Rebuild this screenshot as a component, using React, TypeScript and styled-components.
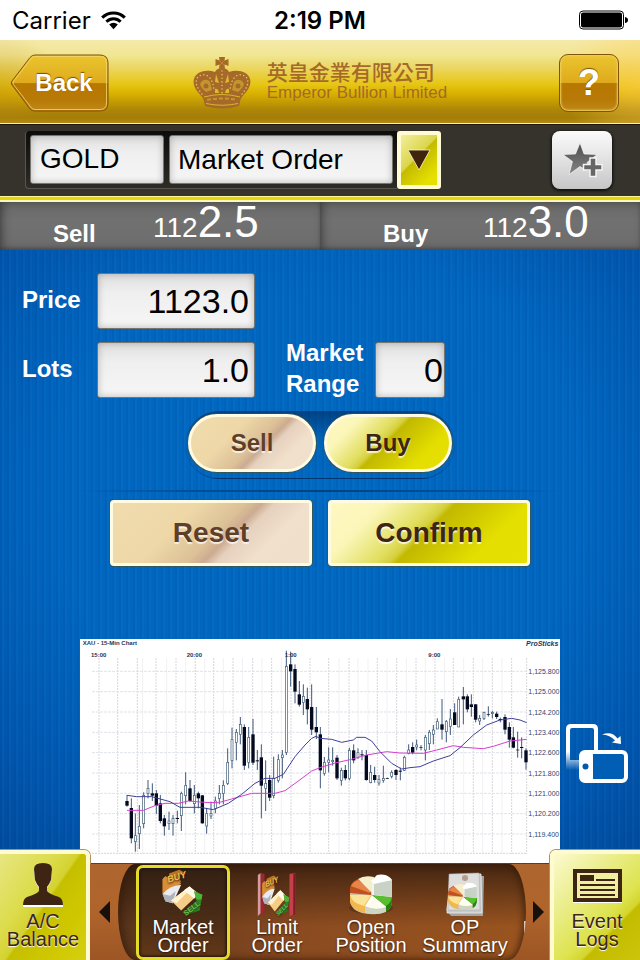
import React from "react";
import styled, { createGlobalStyle, css } from "styled-components";

const GlobalStyle = createGlobalStyle`
  *, *::before, *::after { box-sizing: border-box; }
  body { margin: 0; font-family: "Liberation Sans", Arial, sans-serif; }
  button, input, select { font-family: inherit; margin: 0; border-radius: 0; }
  button { cursor: pointer; padding: 0; border: 0; }
  svg { display: block; flex: none; }
`;

const Page = styled.div`
  display: flex;
  flex-direction: column;
  min-height: 100vh;
  overflow: hidden;
  background: #0056b0;
`;

/* ---------- status bar ---------- */

const StatusBar = styled.div`
  display: grid;
  grid-template-columns: 1fr auto 1fr;
  align-items: center;
  height: 40px;
  padding: 0 12px;
  background: #fff;
  color: #000;
  font-family: Inter, sans-serif;
  font-size: 24px;
`;

const Carrier = styled.div`
  display: flex;
  align-items: center;
  gap: 10px;
`;

const Clock = styled.time`
  font-weight: 600;
`;

const BatterySlot = styled.div`
  justify-self: end;
`;

/* ---------- header ---------- */

const Header = styled.header`
  display: grid;
  grid-template-columns: 1fr auto 1fr;
  align-items: center;
  height: 84px;
  padding: 2px 21px 0 10px;
  border-bottom: 1px solid #fff0c0;
  background:
    radial-gradient(ellipse 12% 90% at 100% 50%, rgba(255, 205, 80, 0.6), transparent),
    radial-gradient(ellipse 10% 70% at 0% 60%, rgba(190, 140, 20, 0.4), transparent),
    linear-gradient(#f5e9ab 0%, #f1e693 18%, #ebd660 34%, #e6c512 54%, #d8b000 65%, #ad8607 84%, #a37d08 94%, #b48a10 100%);
`;

const BackButton = styled.button`
  position: relative;
  width: 99px;
  height: 58px;
  padding-left: 9px;
  background: none;
  color: #fff;
  font-size: 24px;
  font-weight: 700;
  text-shadow: 0 -1px 1px #7c4d00;

  svg { position: absolute; inset: 0; }
  span { position: relative; }
`;

const HelpButton = styled.button`
  justify-self: end;
  width: 60px;
  height: 58px;
  border: 1px solid #82530b;
  border-radius: 9px;
  background: linear-gradient(#ebc52f 0%, #deaa1c 49%, #b87800 51%, #b77a06 80%, #c08917 100%);
  box-shadow: inset 0 0 2px 1px #f0d060;
  color: #fff;
  font-size: 36px;
  font-weight: 700;
  text-shadow: 0 -1px 1px #7c4d00;
`;

const Brand = styled.div`
  display: flex;
  align-items: center;
  gap: 16px;
  margin-right: -11px;
  color: #a5692a;
`;

const BrandName = styled.div`
  font-family: "Liberation Sans", "Noto Sans CJK TC", sans-serif;
  font-size: 21px;
  font-weight: 500;
  line-height: 20px;
`;

const BrandLatin = styled.div`
  font-size: 17px;
  line-height: 20px;
`;

/* ---------- instrument selector ---------- */

const SelectorBar = styled.section`
  display: flex;
  align-items: center;
  justify-content: space-between;
  height: 72px;
  padding: 0 28px 2px 25px;
  border-top: 1px solid #1d1508;
  background: #36332c;
`;

const SelectorGroup = styled.div`
  display: flex;
  align-items: center;
`;

const Recess = styled.div`
  display: flex;
  gap: 5px;
  padding: 4px;
  border: solid #575550;
  border-width: 0 0 1px 1px;
  border-radius: 4px 0 0 4px;
  background: linear-gradient(#0c0c0c, #2f2c27);
`;

const fieldSkin = css`
  border: 1px solid #77756f;
  border-radius: 3px;
  outline: 0;
  background: linear-gradient(#dfdfdf, #efefef 35%, #f6f6f6);
  box-shadow: inset 0 0 7px rgba(90, 90, 90, 0.4);
  color: #000;
`;

const SymbolInput = styled.input`
  ${fieldSkin}
  width: 134px;
  height: 49px;
  padding: 0 9px;
  font-size: 28px;
`;

const TypeSelect = styled.select`
  ${fieldSkin}
  appearance: none;
  width: 224px;
  height: 49px;
  padding: 0 8px;
  font-size: 28px;
`;

const DropButton = styled.button`
  display: grid;
  place-items: center;
  width: 44px;
  height: 58px;
  border: 4px solid #fffbd2;
  border-radius: 3px;
  background: linear-gradient(135deg, #f3ef9c 0%, #dbd64c 43%, #c4bb00 46%, #d0c800 60%, #e6e000 85%);
`;

const FavButton = styled.button`
  display: grid;
  place-items: center;
  width: 60px;
  height: 58px;
  border-radius: 8px;
  background: linear-gradient(#fbfbfb, #e4e4e4 45%, #c6c6c6);
  box-shadow: 0 1px 3px 1px rgba(0, 0, 0, 0.7);
`;

/* ---------- quotes ---------- */

const Quotes = styled.section`
  display: grid;
  grid-template-columns: 1fr 1fr;
  padding-top: 6px;
  background: linear-gradient(#fff59a 0 1px, #e0d80c 1px 4px, #fff6bd 4px 6px, #6c6c6c 6px);
`;

const Quote = styled.div<{ $inset: number }>`
  display: flex;
  align-items: flex-end;
  height: 48px;
  padding-left: ${(p) => p.$inset}px;
  background: linear-gradient(#686868, #717171 40%, #6c6c6c);
  box-shadow: inset 3px 0 8px rgba(0, 0, 0, 0.35), inset 0 -2px 3px rgba(0, 0, 0, 0.15);
  color: #fff;
`;

const QuoteLabel = styled.span`
  width: 100px;
  font-size: 24px;
  font-weight: 700;
  line-height: 32px;
`;

const QuotePrice = styled.span`
  font-size: 28px;
  line-height: 44px;

  strong { font-size: 44px; font-weight: 400; }
`;

/* ---------- order form ---------- */

const Body = styled.main`
  flex: 1;
  display: flex;
  flex-direction: column;
  padding-top: 23px;
  background:
    linear-gradient(rgba(0, 70, 150, 0.08), rgba(0, 70, 150, 0) 8%),
    repeating-linear-gradient(90deg, rgba(0, 40, 110, 0.08) 0 2px, rgba(60, 150, 230, 0.07) 2px 4px, transparent 4px 7px),
    radial-gradient(ellipse 75% 75% at 50% 40%, #0069c2 0%, #0066bf 55%, #0056ad 85%, #004c9e 100%);
`;

const OrderForm = styled.form`
  display: flex;
  flex-direction: column;
`;

const FieldRow = styled.div`
  display: flex;
  align-items: center;
  height: 56px;
  margin: 0 22px 13px;
`;

const FieldLabel = styled.label<{ $wide?: boolean }>`
  width: ${(p) => (p.$wide ? 89 : 75)}px;
  padding-bottom: 4px;
  color: #fff;
  font-size: 24px;
  font-weight: 700;
  line-height: 31px;
`;

const NumberInput = styled.input<{ $small?: boolean }>`
  ${fieldSkin}
  width: ${(p) => (p.$small ? 70 : 158)}px;
  height: 56px;
  padding: 0 ${(p) => (p.$small ? 1 : 5)}px;
  margin-right: 31px;
  font-size: 34px;
  text-align: right;
`;

const SideSwitch = styled.div`
  display: flex;
  align-self: center;
  gap: 8px;
  padding: 3px 3px 6px;
  border-bottom: 1px solid rgba(0, 30, 80, 0.35);
  border-radius: 34px;
  background: linear-gradient(rgba(0, 35, 80, 0.55), rgba(0, 60, 120, 0.12) 40%, transparent);
`;

const gold = css`
  background: linear-gradient(135deg, #fff8c4 0%, #fbf6b8 22%, #e1de5f 41%, #d5d03e 46%, #c2b900 49%, #cfc700 60%, #e4df00 76%, #e5e000 100%);
  color: #3d2413;
`;

const beige = css`
  background: linear-gradient(135deg, #f1dcae 0%, #eed8a8 34%, #dcc097 52%, #ccab91 58%, #e6d1be 63%, #f1e0cb 76%, #efdfcb 100%);
  color: #603f28;
`;

const ActionButton = styled.button<{ $tone: "gold" | "beige"; $pill?: boolean }>`
  ${(p) => (p.$tone === "gold" ? gold : beige)}
  ${(p) =>
    p.$pill
      ? css`
          width: 128px;
          height: 58px;
          border: 3px solid #fffbe2;
          border-radius: 29px;
          font-size: 24px;
        `
      : css`
          width: 202px;
          height: 66px;
          border: 3px solid #fffbe2;
          border-radius: 4px;
          font-size: 28px;
        `}
  background-origin: border-box;
  box-shadow: 0 0 0 1px rgba(80, 80, 30, 0.6);
  font-weight: 700;
  text-shadow: 0 2px 1px rgba(255, 255, 255, 0.75);
`;

const Divider = styled.hr`
  align-self: stretch;
  height: 2px;
  margin: 11px 80px 8px;
  border: 0;
  background: linear-gradient(90deg, transparent, #00509a 20%, #00437f 50%, #00509a 80%, transparent);
`;

const Actions = styled.div`
  display: flex;
  justify-content: center;
  gap: 16px;
`;

/* ---------- chart ---------- */

const ChartRow = styled.section`
  display: grid;
  grid-template-columns: 80px 1fr 80px;
  flex: 1;
  align-items: end;
  padding: 73px 0 1px;
`;

const ChartFrame = styled.figure`
  grid-column: 2;
  margin: 0;
  background: #fff;

  svg { width: 100%; height: auto; }
  text { font-family: "Liberation Sans", Arial, sans-serif; }
`;

const RotateButton = styled.button`
  align-self: center;
  justify-self: start;
  margin: 6px 0 0 6px;
  background: none;
`;

/* ---------- bottom navigation ---------- */

const BottomNav = styled.nav`
  position: relative;
  display: grid;
  grid-template-columns: 90px 1fr 90px;
  align-items: end;
  margin-top: -14px;
`;

const navText = css`
  font-size: 20px;
  line-height: 18px;
  text-align: center;
  text-decoration: none;
`;

const SideTab = styled.a<{ $side: "left" | "right" }>`
  ${navText}
  display: flex;
  flex-direction: column;
  align-items: center;
  justify-content: flex-end;
  gap: 5px;
  height: 110px;
  padding-bottom: 12px;
  border: 4px solid #fffbd0;
  border-bottom: 0;
  box-shadow: 0 0 0 1px #b2905a;
  ${(p) =>
    p.$side === "left"
      ? css`
          border-left: 0;
          border-radius: 0 6px 0 0;
          background: linear-gradient(125deg, #e7e682 0%, #dcdc4c 35%, #d4d230 49%, #c6bf00 51%, #cfc800 75%, #d5cf12 100%);
        `
      : css`
          border-right: 0;
          border-radius: 6px 0 0 0;
          background: linear-gradient(135deg, #fdfad0 0%, #eef09a 25%, #dde34e 60%, #d5d52e 69%, #c3bc00 71%, #cbc40a 100%);
        `}
  color: #3d2413;
  text-shadow: 0 1px 1px #fff;
`;

const Carousel = styled.div`
  display: grid;
  grid-template-columns: 28px 1fr 24px;
  height: 96px;
  background: linear-gradient(#ad662e, #b0642c 50%, #9c5524);
`;

const ArrowButton = styled.button`
  display: grid;
  place-items: center;
  background: none;
`;

const Strip = styled.div`
  display: flex;
  align-items: center;
  overflow: hidden;
  padding-left: 18px;
  border-radius: 17px / 50%;
  background:
    linear-gradient(rgba(40, 22, 12, 0.75), rgba(40, 22, 12, 0) 65%),
    linear-gradient(90deg, #5a361c, #8b4b20 45%, #99541f);
  box-shadow: inset -3px 0 6px rgba(50, 25, 10, 0.6), inset 5px 0 8px rgba(50, 25, 10, 0.5);
`;

const StripItem = styled.a<{ $active?: boolean }>`
  ${navText}
  display: flex;
  flex: none;
  flex-direction: column;
  align-items: center;
  justify-content: flex-end;
  width: 94px;
  height: 95px;
  padding-bottom: 3px;
  border: 3px solid transparent;
  color: #fff;
  text-shadow: 0 1px 2px #2b1608;
  ${(p) =>
    p.$active &&
    css`
      border-color: #e5dc2a;
      border-radius: 7px;
      background: linear-gradient(#332014, #4c2d17 60%, #633817);
      box-shadow: inset 0 0 3px 1px #1a0f08;
    `}
`;

const Peek = styled.span`
  width: 2px;
  height: 12px;
  margin: 30px 0 0 12px;
  background: #d9c9bb;
`;

/* ---------- icons ---------- */

const WifiIcon = () => (
  <svg width="25" height="19" viewBox="0 0 25 19" aria-hidden="true">
    <g fill="none" stroke="#000" strokeWidth="3">
      <path d="M1.2 6.6a16 16 0 0 1 22.6 0" />
      <path d="M5.4 10.8a10 10 0 0 1 14.2 0" />
    </g>
    <path d="M8.2 13.6a6 6 0 0 1 8.6 0L12.500 18.200z" />
  </svg>
);

const BatteryIcon = () => (
  <svg width="49" height="20" viewBox="0 0 49 20" aria-hidden="true">
    <rect x="0.500" y="1" width="44" height="18" rx="3.500" fill="none" stroke="#000" />
    <rect x="2" y="2.500" width="41" height="15" rx="2" />
    <path d="M46 7q3 .5 3 3t-3 3z" />
  </svg>
);

const BackShape = () => (
  <svg width="99" height="58" viewBox="0 0 99 58" aria-hidden="true">
    <defs>
      <linearGradient id="backFill" x1="0" y1="0" x2="0" y2="1">
        <stop offset="0" stopColor="#ebc52f" />
        <stop offset="0.500" stopColor="#deaa1c" />
        <stop offset="0.510" stopColor="#b87800" />
        <stop offset="0.800" stopColor="#b77a06" />
        <stop offset="1" stopColor="#c08917" />
      </linearGradient>
    </defs>
    <path d="M25 1H90Q98 1 98 9V49Q98 57 90 57H25Q22 57 20 55L2 31Q.5 29 2 27L20 3.500Q22 1 25 1Z" fill="url(#backFill)" stroke="#82530b" />
    <path d="M25 2.500H90Q96.500 2.500 96.500 9V49Q96.500 55.500 90 55.500H25Q23 55.500 21.500 54L3.500 30.500Q2.500 29 3.500 27.500L21.500 4.200Q23 2.500 25 2.500Z" fill="none" stroke="#f3d66a" opacity="0.800" />
  </svg>
);

const CrownIcon = () => (
  <svg width="58" height="52" viewBox="0 0 58 52" aria-hidden="true">
    <g fill="#a5692a">
      <path d="M26 0h6l-.5 3.500 4-1.500v7l-4-1.500.5 4h-6l.5-4-4 1.500V2l4 1.500z" />
      <path d="M29 11C25 11 23 13 22 15C14 12 3 14 1 22C-1 30 5 35 9 40L11 43H47L49 40C53 35 59 30 57 22C55 14 44 12 36 15C35 13 33 11 29 11Z" />
      <path d="M10 40Q29 35 48 40L46 49Q29 54 12 49Z" />
    </g>
    <g fill="#dfb92d">
      <path d="M9 24q5-3 8 1l2 8-6 2q-5-4-6-8zM49 24q-5-3-8 1l-2 8 6 2q5-4 6-8z" opacity="0.550" />
      <path d="M23 17l3 9-4-1zM35 17l-3 9 4-1z" />
      <path d="M22 32q3-1 4 4h-4zM36 32q-3-1-4 4h4z" />
    </g>
    <g fill="#a5692a">
      <circle cx="13" cy="29" r="2.500" />
      <circle cx="45" cy="29" r="2.500" />
    </g>
    <g fill="none" stroke="#e5c455" strokeWidth="1.500" strokeLinecap="round" strokeDasharray="0.100 3.500">
      <path d="M9 37C4 31 1 24 5 20C11 15 20 18 21 34" />
      <path d="M49 37C54 31 57 24 53 20C47 15 38 18 37 34" />
      <path d="M29 14V36" />
    </g>
    <g fill="none" stroke="#dcb42b">
      <path d="M11 40Q29 35 47 40" />
      <path d="M13 46.500Q29 50 45 46.500" />
      <path d="M14 43Q29 40 44 43" strokeWidth="2" strokeDasharray="4 2" opacity="0.600" />
      <path d="M26 3l6 6M32 3l-6 6" strokeWidth="0.700" opacity="0.500" />
    </g>
  </svg>
);

const StarPlusIcon = () => (
  <svg width="42" height="36" viewBox="0 0 42 36" aria-hidden="true">
    <defs>
      <linearGradient id="starFill" x1="0" y1="0" x2="0" y2="1">
        <stop offset="0" stopColor="#4c4c4c" />
        <stop offset="1" stopColor="#858585" />
      </linearGradient>
    </defs>
    <path d="M19 1l4 11 13 .5-10 8 3 10-10-6-11 8 3.500-13L2 12.500l12.500-.5z" fill="url(#starFill)" stroke="#fff" strokeWidth="0.600" />
    <path d="M29 16h6v6.500h6v5.500h-6v6.500h-6V28h-6.500v-5.500H29z" fill="#666" stroke="#f4f4f4" strokeWidth="1.500" />
  </svg>
);

const TriangleDown = () => (
  <svg width="24" height="22" viewBox="0 0 24 22" aria-hidden="true">
    <path d="M1 1h22L12 21z" fill="#40220d" stroke="#fdf7b8" strokeWidth="0.800" />
  </svg>
);

const TriangleSide = ({ right }: { right?: boolean }) => (
  <svg width="11" height="22" viewBox="0 0 11 22" aria-hidden="true">
    <path d={right ? "M0 0l11 11-11 11z" : "M11 0L0 11l11 11z"} fill="#17100b" />
  </svg>
);

const RotateIcon = () => (
  <svg width="62" height="60" viewBox="0 0 62 60" aria-hidden="true">
    <defs>
      <linearGradient id="phoneFade" x1="0" y1="0" x2="0" y2="1">
        <stop offset="0" stopColor="#fff" />
        <stop offset="0.600" stopColor="#fff" />
        <stop offset="1" stopColor="#fff" stopOpacity="0" />
      </linearGradient>
    </defs>
    <path fillRule="evenodd" d="M5 0H27Q32 0 32 5V46H0V5Q0 0 5 0ZM4 6V36H28V6Q28 4 26 4H6Q4 4 4 6Z" fill="url(#phoneFade)" />
    <rect x="15" y="28" width="45" height="29" rx="4" fill="#005fb5" stroke="#fff" strokeWidth="4" />
    <rect x="15" y="28" width="12" height="29" rx="3" fill="#fff" />
    <circle cx="19.500" cy="42.500" r="3" fill="#0058aa" />
    <path d="M36 10.500Q46 6.500 51.500 14.500L54.500 12L55 20L46 18.500L49 16.500Q44 11 36 10.500Z" fill="#fff" />
  </svg>
);

const PersonIcon = () => (
  <svg width="42" height="44" viewBox="0 0 42 44" aria-hidden="true">
    <path d="M12 7Q12 2 21 2T30 7L29 18Q27 23 25 25V29Q27 32 37 35Q41 37 41 44H1Q1 37 5 35Q15 32 17 29V25Q15 23 13 18Z" fill="#fff" />
    <path d="M12 6Q12 0 21 0T30 6L29 17Q27 22 25 24V28Q27 31 37 34Q41 36 41 42H1Q1 36 5 34Q15 31 17 28V24Q15 22 13 17Z" fill="#3d2413" />
  </svg>
);

const NewsIcon = () => (
  <svg width="49" height="38" viewBox="0 0 49 38" aria-hidden="true">
    <rect x="2" y="2" width="45" height="29" fill="#f0efa0" stroke="#3d2413" strokeWidth="4" />
    <path d="M0 33.500H49" stroke="#fff" />
    <path d="M7 6h14v6H7z" fill="#3d2413" />
    <path d="M23 11H42M7 16H42M7 21H42M7 26H42" stroke="#3d2413" strokeWidth="2" />
  </svg>
);

const BuySellArt = () => (
  <>
    <path d="M0 12L3 9L7 11V6L18 2L24 5L17 8L20 15L11 21L0 28Z" fill="#bd7425" />
    <path d="M0 12L3 9L7 11L16 13L20 17L0 28Z" fill="#da8d35" />
    <path d="M0 28Q7 19 20 18L11 38L3 36Z" fill="#e9ebef" />
    <path d="M0 28L8 30L14 25L11 38L3 36Z" fill="#aeb3bd" />
    <path d="M9 35L29 20L39 28L20 46Z" fill="#f6cd86" />
    <path d="M9 35L29 20L31 22L15 38Z" fill="#fff2ca" />
    <path d="M23 24L29 20L39 28L34 33Z" fill="#fffbe8" />
    <path d="M34 25L43 29L40 46L25 51L23 48L37 35Z" fill="#2d8625" />
    <path d="M34 25L43 29L42 34L36 34Z" fill="#4fb436" />
    <text x="6" y="16" fontSize="10" fontWeight="700" fontStyle="italic" fill="#f4bd49" transform="rotate(-17 6 16)">BUY</text>
    <text x="25" y="52" fontSize="8" fontWeight="700" fill="#68c552" transform="rotate(-38 25 52)">SELL</text>
  </>
);

const MarketOrderIcon = () => (
  <svg width="46" height="50" viewBox="-1 0 46 54" aria-hidden="true">
    <BuySellArt />
  </svg>
);

const LimitOrderIcon = () => (
  <svg width="42" height="46" viewBox="0 0 42 48" aria-hidden="true">
    <path d="M1 3L4 1V43L1 46Z" fill="#d79ba0" />
    <path d="M4 1L8 2V43L4 44Z" fill="#9d2630" />
    <svg x="5" y="2" width="30" height="46" viewBox="-1 0 46 54" preserveAspectRatio="none">
      <BuySellArt />
    </svg>
    <path d="M34 2L40 1V44L34 46Z" fill="#c3414b" />
    <path d="M38 1L40 2V44L38 45Z" fill="#7c1b25" />
  </svg>
);

const PieArt = () => (
  <>
    <path d="M0 14V25Q1 39 22 39T42 25V16Z" fill="#d4bd9b" />
    <path d="M0 20L21 20L15 38Q1 34 0 27Z" fill="#f2b84e" />
    <path d="M0 20L21 20L14 31Q2 28 0 20Z" fill="#fbe49a" />
    <path d="M0 13Q1 7 8 4L21 15V20L0 18Z" fill="#c1501e" />
    <path d="M1 11Q3 7 8 5L21 15L20 18Z" fill="#e78549" />
    <path d="M8 4Q14 0 24 2L22 18Z" fill="#f4eecb" />
    <path d="M15 31L22 20L36 32V37Q25 41 15 38Z" fill="#cdd6c3" />
    <path d="M15 31L22 20L36 32Q25 36 15 31Z" fill="#fffdf0" />
    <path d="M22 20L42 22V28Q41 34 36 37V31Z" fill="#238210" />
    <path d="M22 20L42 22Q41 28 36 31Z" fill="#57bf2d" />
    <path d="M22 5Q34-5 42 5V22L22 20Z" fill="#f2f5ec" />
    <path d="M24 8L42 5V22L24 20Z" fill="#c9d3c5" />
    <path d="M21 6L27 0Q36-2 42 5L24 9Z" fill="#fff" />
  </>
);

const PositionIcon = () => (
  <svg width="44" height="46" viewBox="-1 -3 44 46" aria-hidden="true">
    <ellipse cx="21" cy="33" rx="22" ry="6" fill="#3b210f" opacity="0.400" />
    <PieArt />
  </svg>
);

const SummaryIcon = () => (
  <svg width="40" height="46" viewBox="0 0 40 46" aria-hidden="true">
    <path d="M7 4L39 4L38 44L6 44L1 38Z" fill="#a4a4a4" />
    <path d="M5 3L36 2L37 41L2 41Z" fill="#c9c9c9" stroke="#eee" strokeWidth="0.800" />
    <path d="M4 2L34 1L35 38L3 38Z" fill="#dedede" stroke="#aaa" strokeWidth="0.500" />
    <circle cx="20" cy="6" r="3" fill="#b89b8a" />
    <svg x="1" y="9" width="33" height="30" viewBox="-1 -3 44 44">
      <PieArt />
    </svg>
  </svg>
);

/* ---------- chart data: x, high, low, body top, body bottom, filled ---------- */

type Candle = [number, number, number, number, number, 0 | 1];

const candles: Candle[] = [
  [141, 468, 503, 486, 500, 1], [154, 478, 613, 507, 598, 1], [166, 523, 638, 590, 608, 0],
  [178, 498, 630, 562, 584, 0], [191, 460, 568, 469, 554, 0], [204, 423, 478, 448, 463, 0],
  [217, 433, 486, 463, 470, 1], [229, 453, 525, 463, 500, 1], [241, 468, 553, 493, 546, 1],
  [253, 528, 590, 538, 562, 1], [267, 518, 573, 546, 554, 0], [279, 528, 590, 538, 554, 0],
  [292, 515, 553, 537, 540, 1], [304, 458, 576, 463, 530, 0], [317, 400, 496, 439, 470, 0],
  [330, 423, 488, 448, 486, 1], [343, 438, 523, 469, 494, 0], [355, 458, 508, 463, 478, 1],
  [367, 468, 554, 469, 553, 1], [380, 508, 584, 524, 561, 0], [393, 488, 540, 523, 531, 0],
  [406, 473, 523, 486, 508, 0], [418, 438, 496, 463, 478, 0], [430, 424, 496, 439, 463, 0],
  [443, 328, 438, 370, 433, 0], [456, 266, 388, 302, 364, 0], [469, 270, 364, 280, 310, 0],
  [481, 234, 316, 256, 286, 0], [493, 256, 393, 264, 380, 1], [506, 264, 388, 295, 370, 0],
  [519, 240, 378, 286, 371, 1], [532, 333, 393, 364, 367, 1], [544, 316, 538, 355, 440, 1],
  [557, 364, 516, 433, 448, 0], [569, 408, 486, 423, 476, 1], [581, 353, 478, 418, 470, 0],
  [595, 346, 431, 362, 424, 0], [607, 333, 418, 348, 356, 0], [619, 35, 348, 82, 340, 0],
  [632, 38, 143, 76, 97, 1], [645, 76, 193, 90, 158, 1], [658, 126, 203, 166, 197, 1],
  [670, 136, 228, 172, 190, 0], [682, 146, 256, 180, 211, 1], [695, 136, 288, 204, 272, 1],
  [709, 204, 300, 264, 280, 1], [721, 264, 448, 286, 394, 1], [733, 354, 410, 370, 403, 0],
  [746, 325, 400, 363, 370, 0], [758, 325, 380, 364, 368, 0], [771, 348, 423, 356, 418, 1],
  [784, 386, 440, 394, 424, 0], [796, 378, 424, 393, 418, 1], [808, 326, 424, 334, 418, 0],
  [821, 316, 373, 334, 364, 1], [834, 328, 360, 341, 355, 0], [846, 333, 364, 346, 349, 1],
  [859, 333, 425, 348, 423, 1], [872, 378, 433, 400, 431, 0], [884, 383, 431, 408, 423, 1],
  [897, 408, 440, 422, 432, 0], [910, 380, 431, 418, 424, 0], [922, 416, 420, 417, 419, 1],
  [935, 394, 418, 400, 412, 0], [948, 390, 423, 393, 408, 1], [961, 386, 424, 395, 398, 1],
  [973, 350, 396, 355, 394, 0], [986, 316, 346, 333, 343, 0], [998, 310, 346, 324, 341, 1],
  [1010, 302, 334, 318, 324, 0], [1023, 318, 334, 325, 327, 1], [1036, 288, 364, 295, 333, 0],
  [1048, 273, 333, 280, 314, 0], [1060, 258, 316, 273, 286, 0], [1072, 238, 270, 248, 270, 0],
  [1086, 180, 302, 256, 272, 1], [1099, 243, 310, 248, 278, 0], [1111, 210, 288, 240, 262, 0],
  [1124, 193, 258, 220, 258, 1], [1136, 173, 264, 181, 264, 0], [1150, 144, 256, 172, 181, 1],
  [1162, 166, 220, 172, 211, 1], [1174, 166, 233, 196, 204, 1], [1187, 195, 250, 196, 242, 1],
  [1199, 228, 258, 238, 246, 0], [1212, 218, 243, 220, 238, 0], [1225, 202, 233, 225, 227, 1],
  [1237, 216, 238, 220, 224, 0], [1250, 218, 240, 224, 234, 1], [1261, 236, 250, 240, 243, 1],
  [1275, 226, 286, 234, 272, 1], [1288, 250, 326, 264, 302, 1], [1300, 264, 328, 295, 326, 1],
  [1313, 278, 356, 332, 334, 1], [1325, 295, 358, 324, 327, 1], [1338, 328, 392, 334, 370, 1],
];

const slowAverage =
  "141,514 190,514 225,500 255,493 295,493 325,486 375,490 415,491 455,480 515,463 585,463 615,455 655,426 695,396 720,386 765,372 810,362 860,348 920,338 960,342 1030,343 1070,333 1120,320 1150,325 1210,329 1240,322 1290,306 1340,301";
const fastAverage =
  "141,469 170,473 215,473 270,488 300,505 360,505 400,512 445,493 485,466 525,433 555,418 585,418 610,406 645,353 675,318 695,298 708,292 720,298 755,301 785,310 820,303 830,295 855,295 875,306 900,338 935,373 965,390 990,386 1020,383 1060,366 1110,350 1140,326 1180,288 1220,258 1260,243 1295,238 1320,243 1340,251";

const priceLabels = ["1,125.800", "1,125.000", "1,124.200", "1,123.400", "1,122.600", "1,121.800", "1,121.000", "1,120.200", "1,119.400"];
const timeLabels: [string, number][] = [["15:00", 56], ["20:00", 343], ["1:00", 632], ["9:00", 1063]];
const majorLines = [57, 113, 172, 228, 288, 346, 401, 459, 518, 575, 633, 690, 746, 807, 892, 950, 1008, 1065, 1120, 1180, 1237, 1295, 1340];
const minorLines = [188, 260, 317, 374, 430, 487, 546, 604, 777, 834, 864, 921, 979, 1036, 1093, 1151, 1208, 1266];

const PriceChart = () => (
  <svg viewBox="0 0 1440 672" role="img" aria-label="XAU 15-minute candlestick chart">
    <rect width="1440" height="672" fill="#fff" />
    <g fill="none" strokeWidth="3">
      {majorLines.map((x) => (
        <path key={x} d={`M${x} 57V645`} stroke="#d9d6dc" strokeDasharray="6 3" />
      ))}
      {minorLines.map((x) => (
        <path key={x} d={`M${x} 57V645`} stroke="#f1f0f4" />
      ))}
      {priceLabels.map((label, i) => (
        <path key={label} d={`M36 ${97 + i * 61}H1340`} stroke="#dfe3e8" strokeDasharray="9 3" />
      ))}
      <path d="M36 643H1340" stroke="#d6d6da" strokeDasharray="6 3" />
    </g>
    {candles.map(([x, high, low, top, bottom, filled]) => (
      <g key={x}>
        <path d={`M${x} ${high}V${low}`} stroke="#40577a" strokeWidth="3" />
        <rect
          x={filled ? x - 5 : x - 3}
          y={top}
          width={filled ? 10 : 6}
          height={bottom - top}
          fill={filled ? "#050a20" : "#fff"}
          stroke={filled ? "none" : "#3c5a74"}
          strokeWidth="2"
        />
      </g>
    ))}
    <polyline points={slowAverage} fill="none" stroke="#d63ed0" strokeWidth="3" />
    <polyline points={fastAverage} fill="none" stroke="#40409a" strokeWidth="3" />
    <g fill="#1c3560" fontSize="18" fontWeight="700">
      <text x="8" y="19">XAU - 15-Min Chart</text>
      {timeLabels.map(([label, x]) => (
        <text key={label} x={x} y="54" textAnchor="middle">{label}</text>
      ))}
      <text x="1435" y="20" fontSize="21" fontStyle="italic" textAnchor="end">ProSticks</text>
    </g>
    <g fill="#2b4570" fontSize="21">
      {priceLabels.map((label, i) => (
        <text key={label} x="1345" y={105 + i * 61}>{label}</text>
      ))}
    </g>
  </svg>
);

/* ---------- app ---------- */

const navItems = [
  { lines: ["Market", "Order"], icon: <MarketOrderIcon />, active: true },
  { lines: ["Limit", "Order"], icon: <LimitOrderIcon /> },
  { lines: ["Open", "Position"], icon: <PositionIcon /> },
  { lines: ["OP", "Summary"], icon: <SummaryIcon /> },
];

export default function App() {
  return (
    <Page>
      <GlobalStyle />
      <StatusBar>
        <Carrier>
          Carrier <WifiIcon />
        </Carrier>
        <Clock>2:19 PM</Clock>
        <BatterySlot>
          <BatteryIcon />
        </BatterySlot>
      </StatusBar>

      <Header>
        <BackButton type="button">
          <BackShape />
          <span>Back</span>
        </BackButton>
        <Brand>
          <CrownIcon />
          <div>
            <BrandName lang="zh-Hant">英皇金業有限公司</BrandName>
            <BrandLatin>Emperor Bullion Limited</BrandLatin>
          </div>
        </Brand>
        <HelpButton type="button">?</HelpButton>
      </Header>

      <SelectorBar>
        <SelectorGroup>
          <Recess>
            <SymbolInput aria-label="Product" defaultValue="GOLD" />
            <TypeSelect aria-label="Order type" defaultValue="Market Order">
              <option>Market Order</option>
              <option>Limit Order</option>
            </TypeSelect>
          </Recess>
          <DropButton type="button" aria-label="Choose order type">
            <TriangleDown />
          </DropButton>
        </SelectorGroup>
        <FavButton type="button" aria-label="Add to favourites">
          <StarPlusIcon />
        </FavButton>
      </SelectorBar>

      <Quotes>
        <Quote $inset={53}>
          <QuoteLabel>Sell</QuoteLabel>
          <QuotePrice>112<strong>2.5</strong></QuotePrice>
        </Quote>
        <Quote $inset={63}>
          <QuoteLabel>Buy</QuoteLabel>
          <QuotePrice>112<strong>3.0</strong></QuotePrice>
        </Quote>
      </Quotes>

      <Body>
        <OrderForm onSubmit={(e) => e.preventDefault()}>
          <FieldRow>
            <FieldLabel htmlFor="price">Price</FieldLabel>
            <NumberInput id="price" inputMode="decimal" defaultValue="1123.0" />
          </FieldRow>
          <FieldRow>
            <FieldLabel htmlFor="lots">Lots</FieldLabel>
            <NumberInput id="lots" inputMode="decimal" defaultValue="1.0" />
            <FieldLabel htmlFor="range" $wide>Market Range</FieldLabel>
            <NumberInput id="range" inputMode="numeric" defaultValue="0" $small />
          </FieldRow>
          <SideSwitch role="group" aria-label="Side">
            <ActionButton type="button" $tone="beige" $pill>Sell</ActionButton>
            <ActionButton type="button" $tone="gold" $pill aria-pressed="true">Buy</ActionButton>
          </SideSwitch>
          <Divider />
          <Actions>
            <ActionButton type="reset" $tone="beige">Reset</ActionButton>
            <ActionButton type="submit" $tone="gold">Confirm</ActionButton>
          </Actions>
        </OrderForm>
        <ChartRow>
          <ChartFrame>
            <PriceChart />
          </ChartFrame>
          <RotateButton type="button" aria-label="Rotate chart">
            <RotateIcon />
          </RotateButton>
        </ChartRow>
      </Body>

      <BottomNav>
        <SideTab href="#balance" $side="left">
          <PersonIcon />
          <span>A/C<br />Balance</span>
        </SideTab>
        <Carousel>
          <ArrowButton type="button" aria-label="Previous">
            <TriangleSide />
          </ArrowButton>
          <Strip>
            {navItems.map(({ lines, icon, active }) => (
              <StripItem key={lines.join(" ")} href="#order" $active={active}>
                {icon}
                <span>{lines[0]}<br />{lines[1]}</span>
              </StripItem>
            ))}
            <Peek />
          </Strip>
          <ArrowButton type="button" aria-label="Next">
            <TriangleSide right />
          </ArrowButton>
        </Carousel>
        <SideTab href="#logs" $side="right">
          <NewsIcon />
          <span>Event<br />Logs</span>
        </SideTab>
      </BottomNav>
    </Page>
  );
}
